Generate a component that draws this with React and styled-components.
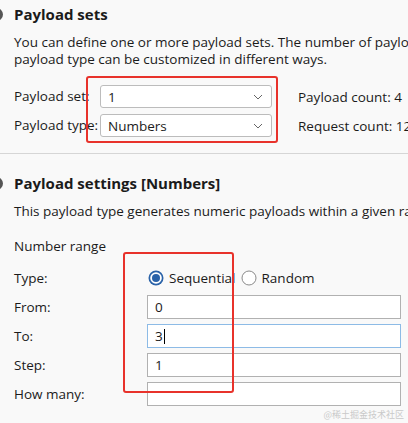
import styled, { createGlobalStyle } from "styled-components";

const GlobalStyle = createGlobalStyle`
	html, body {
		margin: 0;
		padding: 0;
		background: #f9f9f9;
	}
	body {
		font-family: "Open Sans", "Noto Sans", sans-serif;
		color: #1b1b1b;
		width: 408px;
		height: 423px;
		overflow: hidden;
	}
`;

const Page = styled.div`
	position: relative;
	width: 408px;
	height: 423px;
	overflow: hidden;
`;

const Section = styled.section`
	position: relative;
	padding: ${(p) => p.$pad};
	border-bottom: ${(p) => (p.$divider ? "1px solid #d6d6d6" : "none")};
`;

const HelpDot = styled.span`
	position: absolute;
	left: -10px;
	top: ${(p) => p.$top}px;
	width: 13px;
	height: 13px;
	border-radius: 50%;
	background: #555;
`;

const Title = styled.h2`
	margin: 0 0 0 14px;
	font-size: 15px;
	line-height: 20px;
	font-weight: 700;
	white-space: nowrap;
`;

const Desc = styled.p`
	margin: 10px 0 0 14px;
	font-size: 13.5px;
	line-height: 17px;
	white-space: pre;
`;

const SetsGrid = styled.div`
	margin: 17px 0 0 14px;
	display: grid;
	grid-template-columns: 86px 172px auto;
	row-gap: 6px;
	align-items: center;
`;

const Label = styled.span`
	font-size: 13.5px;
	line-height: 23px;
	white-space: nowrap;
`;

const Count = styled.span`
	font-size: 13.5px;
	white-space: nowrap;
	padding-left: 26px;
`;

const Select = styled.div`
	height: 23px;
	box-sizing: border-box;
	border: 1px solid #bcbcbc;
	border-radius: 3px;
	background: #fff;
	display: flex;
	align-items: center;
	justify-content: space-between;
	padding: 0 8px 0 7px;
	font-size: 13.5px;
`;

const Chevron = () => (
	<svg width="10" height="6" viewBox="0 0 10 6">
		<path d="M1 1l4 4 4-4" fill="none" stroke="#666" strokeWidth="1" />
	</svg>
);

const SubLabel = styled.div`
	margin: 18px 0 0 14px;
	font-size: 13.5px;
	line-height: 17px;
`;

const RangeGrid = styled.div`
	margin: 11px 0 0 14px;
	display: grid;
	grid-template-columns: 133px 254px;
	grid-auto-rows: 24px;
	row-gap: 5px;
	align-items: center;
`;

const Radios = styled.div`
	display: flex;
	align-items: center;
	gap: 5px;
	padding-left: 1px;
	font-size: 13.5px;
`;

const RadioItem = styled.label`
	display: flex;
	align-items: center;
	gap: 5px;
`;

const Radio = ({ checked }) => (
	<svg width="16" height="16" viewBox="0 0 16 16">
		{checked ? (
			<>
				<circle cx="8" cy="8" r="7.5" fill="#2a62a8" />
				<circle cx="8" cy="8" r="5.8" fill="#fff" />
				<circle cx="8" cy="8" r="4" fill="#2a62a8" />
			</>
		) : (
			<circle cx="8" cy="8" r="7" fill="#fff" stroke="#8a8a8a" strokeWidth="1" />
		)}
	</svg>
);

const Input = styled.div`
	height: 24px;
	box-sizing: border-box;
	border: 1px solid ${(p) => (p.$focused ? "#8dbbe6" : "#b1b1b1")};
	background: #fff;
	display: flex;
	align-items: center;
	padding: 0 7px;
	font-size: 13.5px;
`;

const Caret = styled.span`
	display: inline-block;
	width: 1px;
	height: 15px;
	background: #000;
	margin-left: 1px;
`;

const Annotation = styled.div`
	position: absolute;
	left: ${(p) => p.$x}px;
	top: ${(p) => p.$y}px;
	width: ${(p) => p.$w}px;
	height: ${(p) => p.$h}px;
	box-sizing: border-box;
	border: 2.5px solid #e8322b;
	border-radius: 3px;
	pointer-events: none;
`;

const Watermark = styled.div`
	position: absolute;
	right: 4px;
	bottom: 2px;
	font-family: "Noto Sans CJK SC", sans-serif;
	font-size: 9px;
	color: #c9c9c9;
`;

export default function App() {
	return (
		<Page>
			<GlobalStyle />
			<Section $pad="4px 0 16px" $divider>
				<HelpDot $top={8} />
				<Title>Payload sets</Title>
				<Desc>
					{"You can define one or more payload sets. The number of payload sets depends on the attack type.\npayload type can be customized in different ways."}
				</Desc>
				<SetsGrid>
					<Label>Payload set:</Label>
					<Select>
						<span>1</span>
						<Chevron />
					</Select>
					<Count>Payload count: 4</Count>
					<Label>Payload type:</Label>
					<Select>
						<span>Numbers</span>
						<Chevron />
					</Select>
					<Count>Request count: 12</Count>
				</SetsGrid>
			</Section>
			<Section $pad="19px 0 0">
				<HelpDot $top={23} />
				<Title>Payload settings [Numbers]</Title>
				<Desc>This payload type generates numeric payloads within a given range and in a specified format.</Desc>
				<SubLabel>Number range</SubLabel>
				<RangeGrid>
					<Label>Type:</Label>
					<Radios>
						<RadioItem>
							<Radio checked />
							Sequential
						</RadioItem>
						<RadioItem>
							<Radio />
							Random
						</RadioItem>
					</Radios>
					<Label>From:</Label>
					<Input>0</Input>
					<Label>To:</Label>
					<Input $focused>
						3<Caret />
					</Input>
					<Label>Step:</Label>
					<Input>1</Input>
					<Label>How many:</Label>
					<Input />
				</RangeGrid>
			</Section>
			<Annotation $x={86} $y={76} $w={192} $h={67} />
			<Annotation $x={123} $y={252} $w={111} $h={141} />
			<Watermark>@稀土掘金技术社区</Watermark>
		</Page>
	);
}
